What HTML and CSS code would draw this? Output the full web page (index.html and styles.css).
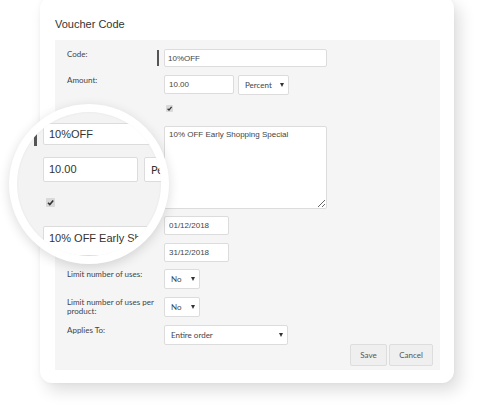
FILE: index.html
```html
<!DOCTYPE html>
<html lang="en">
<head>
<meta charset="utf-8">
<title>Voucher Code</title>
<link rel="stylesheet" href="styles.css">
</head>
<body>
<div class="page">
  <div class="card">
    <h1 class="title">Voucher Code</h1>
    <div class="panel">
      <div class="row r-code">
        <div class="label">Code:</div>
        <div class="mark"><span class="bar"></span></div>
        <input class="field w-code h18" value="10%OFF" readonly>
      </div>
      <div class="row r-amount">
        <div class="label">Amount:</div>
        <div class="mark"></div>
        <div class="group">
          <input class="field w-amount" value="10.00" readonly>
          <div class="select w-percent"><span>Percent</span><i class="caret"></i></div>
        </div>
      </div>
      <div class="row r-check">
        <div class="label"></div>
        <div class="mark"></div>
        <div class="check"><svg viewBox="0 0 7 7" width="7" height="7"><path d="M1.6 3.7 L3 5.1 L5.6 1.9" fill="none" stroke="#333" stroke-width="1.3"/></svg></div>
      </div>
      <div class="row r-desc">
        <div class="label"></div>
        <div class="mark"></div>
        <textarea class="area" readonly>10% OFF Early Shopping Special</textarea>
      </div>
      <div class="row r-date1">
        <div class="label"></div>
        <div class="mark"></div>
        <input class="field w-date" value="01/12/2018" readonly>
      </div>
      <div class="row r-date2">
        <div class="label"></div>
        <div class="mark"></div>
        <input class="field w-date" value="31/12/2018" readonly>
      </div>
      <div class="row r-limit">
        <div class="label">Limit number of uses:</div>
        <div class="mark"></div>
        <div class="select w-no"><span>No</span><i class="caret"></i></div>
      </div>
      <div class="row r-sel">
        <div class="label">Limit number of uses per product:</div>
        <div class="mark"></div>
        <div class="select w-no"><span>No</span><i class="caret"></i></div>
      </div>
      <div class="row r-sel">
        <div class="label">Applies To:</div>
        <div class="mark"></div>
        <div class="select w-applies"><span>Entire order</span><i class="caret"></i></div>
      </div>
      <div class="actions">
        <button class="btn w-save">Save</button>
        <button class="btn w-cancel">Cancel</button>
      </div>
    </div>
  </div>

  <div class="lens">
    <div class="lens-inner">
      <div class="lrow">
        <span class="lbar"></span>
        <div class="lfield lw-code">10%OFF</div>
      </div>
      <div class="lrow lr-amount">
        <div class="lfield lw-amount">10.00</div>
        <div class="lfield lselect">Percent</div>
      </div>
      <div class="lcheck"><svg viewBox="0 0 9 9" width="9" height="9"><path d="M2 4.8 L3.8 6.6 L7.2 2.4" fill="none" stroke="#333" stroke-width="1.6"/></svg></div>
      <div class="lfield lw-desc">10% OFF Early Shopping Special</div>
    </div>
  </div>
</div>
</body>
</html>
```

FILE: styles.css
```css
html, body {
  margin: 0;
  padding: 0;
  background: #ffffff;
}

.page {
  position: relative;
  width: 480px;
  height: 408px;
  overflow: hidden;
  padding-left: 40px;
  box-sizing: border-box;
}

.card {
  width: 414px;
  margin-top: -4px;
  background: #ffffff;
  border-radius: 12px;
  box-shadow: 6px 8px 16px rgba(0, 0, 0, 0.13), 0 0 4px rgba(0, 0, 0, 0.04);
  padding: 22px 14px 13px 15px;
  box-sizing: border-box;
}

.title {
  margin: 0 0 9px;
  font: 400 11px/13px "Liberation Sans", Arial, sans-serif;
  color: #333333;
}

.panel {
  background: #f5f5f5;
  padding: 9px 7px 4px 12px;
  display: flex;
  flex-direction: column;
}

.row {
  display: grid;
  grid-template-columns: 90px 7px auto;
  align-items: start;
}

.r-amount { margin-top: 8px; }
.r-check { margin-top: 10px; }
.r-desc { margin-top: 14px; }
.r-date1 { margin-top: 7px; }
.r-date2 { margin-top: 8px; }
.r-limit { margin-top: 7px; }
.r-sel { margin-top: 8px; }

.label {
  font: 400 8px/9px Lato, "Liberation Sans", sans-serif;
  color: #444444;
  padding-top: 1px;
}

.mark {
  height: 1px;
}

.bar {
  display: block;
  width: 2px;
  height: 16px;
  margin-top: 1px;
  background: #555555;
}

.field {
  box-sizing: border-box;
  height: 19px;
  border: 1px solid #dcdcdc;
  border-radius: 2px;
  background: #ffffff;
  font: 400 8px "Liberation Sans", Arial, sans-serif;
  color: #444444;
  padding: 0 4px;
  margin: 0;
  outline: none;
}

.h18 { height: 18px; padding-left: 3px; }
.w-code { width: 163px; }
.w-amount { width: 70px; }
.w-date { width: 65px; }

.group {
  display: flex;
  gap: 4px;
}

.select {
  box-sizing: border-box;
  height: 20px;
  border: 1px solid #dcdcdc;
  border-radius: 2px;
  background: #ffffff;
  display: flex;
  align-items: center;
  justify-content: space-between;
  padding: 0 4px 0 6px;
  font: 400 8px Lato, "Liberation Sans", sans-serif;
  color: #444444;
}

.w-percent { width: 51px; }
.w-no { width: 36px; }
.w-applies { width: 124px; }

.caret {
  width: 0;
  height: 0;
  border-left: 2.5px solid transparent;
  border-right: 2.5px solid transparent;
  border-top: 4px solid #333333;
}

.check {
  width: 7px;
  height: 7px;
  margin-left: 2px;
  background: #d9d9d9;
  border-radius: 1px;
  display: flex;
}

.area {
  box-sizing: border-box;
  width: 163px;
  height: 83px;
  border: 1px solid #dcdcdc;
  border-radius: 2px;
  background: #ffffff;
  font: 400 8px/9px "Liberation Sans", Arial, sans-serif;
  color: #444444;
  padding: 3px 4px;
  margin: 0;
  outline: none;
}

.actions {
  display: flex;
  justify-content: flex-end;
  gap: 2px;
  margin-top: -1px;
}

.btn {
  box-sizing: border-box;
  height: 22px;
  border: 1px solid #dddddd;
  border-radius: 2px;
  background: #efefef;
  font: 400 8px Lato, "Liberation Sans", sans-serif;
  color: #555555;
  padding: 0;
  margin: 0;
}

.w-save { width: 37px; }
.w-cancel { width: 44px; }

/* magnifier lens overlay */
.lens {
  position: absolute;
  left: 9px;
  top: 104px;
  width: 160px;
  height: 160px;
  border-radius: 50%;
  background: #ffffff;
  box-shadow: 0 3px 12px rgba(0, 0, 0, 0.14);
  padding: 8px;
  box-sizing: border-box;
}

.lens-inner {
  width: 144px;
  height: 144px;
  border-radius: 50%;
  overflow: hidden;
  background: #f3f3f3;
  box-shadow: inset 0 0 3px rgba(0, 0, 0, 0.06);
  padding: 11px 0 0 26px;
  box-sizing: border-box;
}

.lrow {
  display: flex;
  align-items: flex-start;
}

.lbar {
  flex: none;
  width: 3px;
  height: 13px;
  margin: 10px 6px 0 -9px;
  background: #555555;
}

.lfield {
  flex: none;
  box-sizing: border-box;
  height: 22px;
  border: 1px solid #dcdcdc;
  border-radius: 2px;
  background: #ffffff;
  font: 400 11px/13px "Liberation Sans", Arial, sans-serif;
  color: #333333;
  padding: 0 5px;
  display: flex;
  align-items: center;
  white-space: nowrap;
}

.lw-code { width: 220px; }

.lr-amount { margin-top: 11px; }
.lw-amount { width: 95px; height: 25px; }
.lselect {
  width: 80px;
  height: 25px;
  margin-left: 6px;
  padding-left: 6px;
  font-family: Lato, "Liberation Sans", sans-serif;
}

.lcheck {
  width: 9px;
  height: 9px;
  margin: 16px 0 0 3px;
  background: #d9d9d9;
  border-radius: 1px;
  display: flex;
}

.lw-desc {
  width: 220px;
  height: 30px;
  margin-top: 19px;
  align-items: flex-start;
  padding-top: 5px;
}
```
